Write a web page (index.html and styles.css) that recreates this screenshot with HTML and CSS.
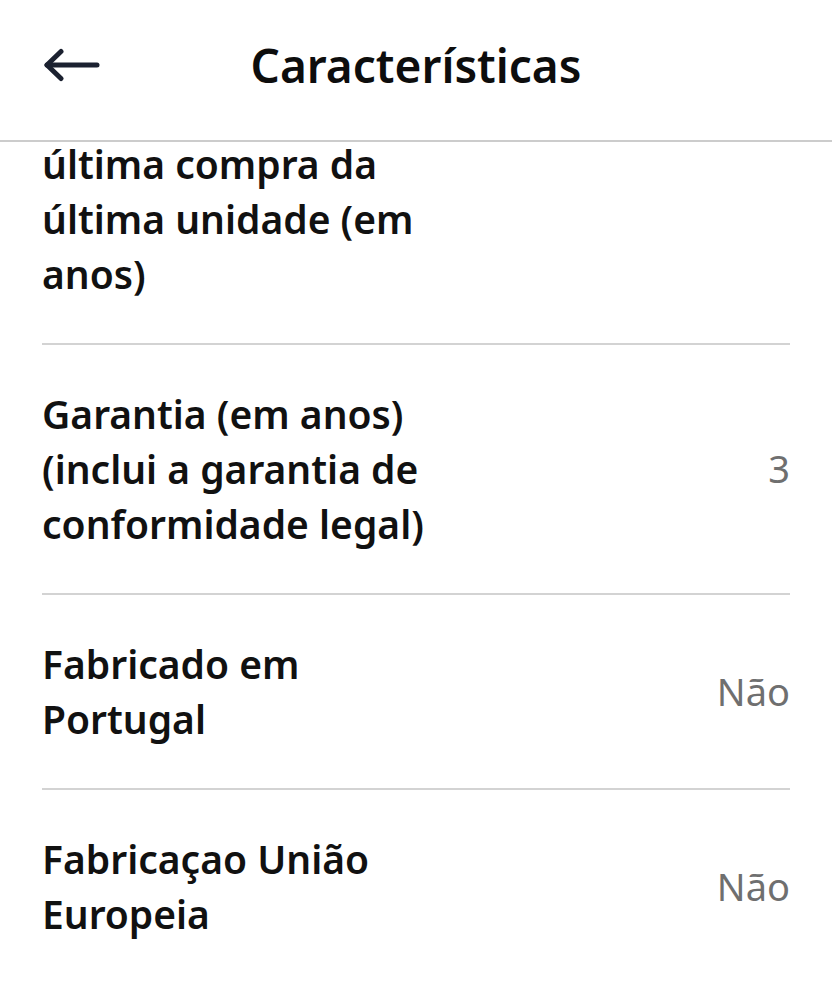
FILE: index.html
```html
<!DOCTYPE html>
<html lang="pt">
<head>
<meta charset="utf-8">
<title>Características</title>
<link rel="stylesheet" href="styles.css">
</head>
<body>
<header class="topbar">
  <button class="back" aria-label="Voltar">
    <svg width="56" height="34" viewBox="0 0 56 34" fill="none" stroke="#1b2130" stroke-width="5" stroke-linecap="round" stroke-linejoin="round">
      <path d="M3 17 H53"/>
      <path d="M17 3.5 L3 17 L17 30.5"/>
    </svg>
  </button>
  <h1 class="title">Características</h1>
  <span class="spacer"></span>
</header>
<main class="list">
  <div class="row row-first">
    <div class="label">última compra da última unidade (em anos)</div>
    <div class="value"></div>
  </div>
  <div class="row">
    <div class="label">Garantia (em anos) (inclui a garantia de conformidade legal)</div>
    <div class="value">3</div>
  </div>
  <div class="row">
    <div class="label">Fabricado em Portugal</div>
    <div class="value">Não</div>
  </div>
  <div class="row">
    <div class="label">Fabricaçao União Europeia</div>
    <div class="value">Não</div>
  </div>
</main>
</body>
</html>
```

FILE: styles.css
```css
* { box-sizing: border-box; }

html, body {
  margin: 0;
  padding: 0;
  background: #ffffff;
  height: 1000px;
  overflow: hidden;
}

body {
  font-family: "Noto Sans", "Open Sans", "Liberation Sans", sans-serif;
  color: #111111;
}

.topbar {
  display: grid;
  grid-template-columns: 1fr auto 1fr;
  align-items: center;
  height: 142px;
  padding-bottom: 10px;
  border-bottom: 2px solid #cccccc;
}

.back {
  justify-self: start;
  display: flex;
  margin-left: 44px;
  padding: 0;
  border: 0;
  background: none;
}

.title {
  margin: 0;
  font-size: 46px;
  line-height: 1;
  font-weight: 600;
  color: #0d0d0d;
}

.list {
  margin-top: -6px;
  padding: 0 42px;
}

.row {
  display: flex;
  align-items: center;
  justify-content: space-between;
  padding: 41px 0 42px;
  border-bottom: 2px solid #d3d3d3;
}

.row-first {
  padding-top: 0;
}

.row:last-child {
  border-bottom: 0;
}

.label {
  width: 400px;
  font-size: 39px;
  line-height: 55px;
  font-weight: 600;
  color: #111111;
}

.value {
  font-size: 38px;
  line-height: 55px;
  font-weight: 400;
  color: #6f6f6f;
  text-align: right;
}
```
